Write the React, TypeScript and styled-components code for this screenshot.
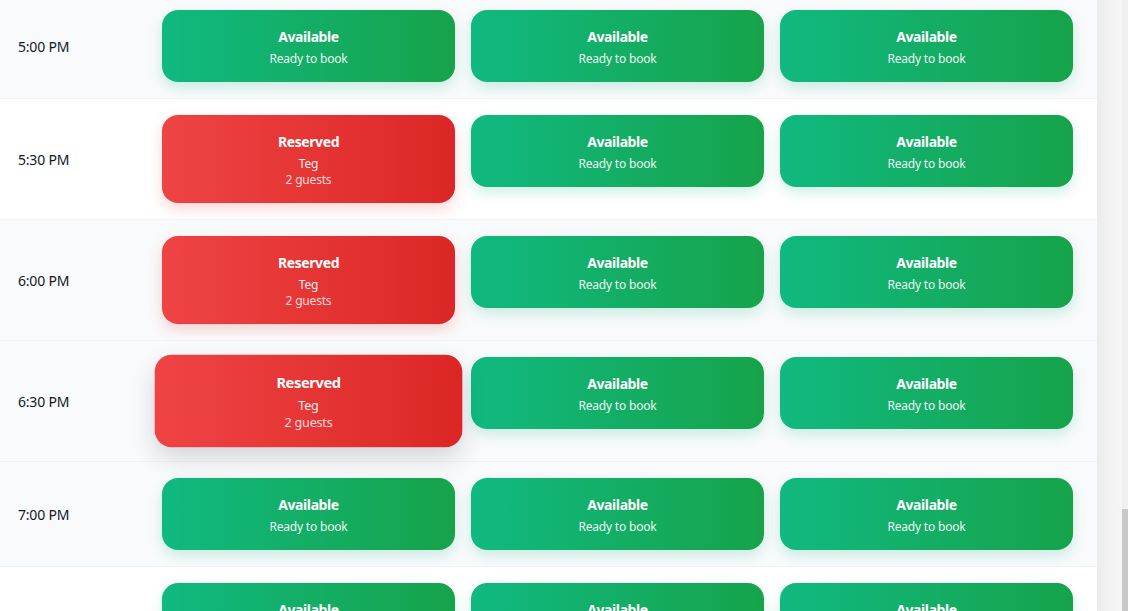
import React from "react";
import styled, { createGlobalStyle, css } from "styled-components";

const GlobalStyle = createGlobalStyle`
  html, body { margin: 0; padding: 0; height: 100%; overflow: hidden; background: #f3f4f6; }
  body { font-family: "Noto Sans", "Open Sans", sans-serif; }
  * { box-sizing: border-box; }
`;

const Page = styled.div`
  display: flex;
  width: 1128px;
  height: 611px;
  overflow: hidden;
`;

const Board = styled.div`
  width: 1097px;
  flex: none;
  background: #ffffff;
  margin-top: -6px;
  display: flex;
  flex-direction: column;
`;

const Gutter = styled.div`
  width: 25px;
  flex: none;
  background: linear-gradient(90deg, #ebebeb 0%, #f2f2f2 50%, #f6f6f6 100%);
`;

const ScrollTrack = styled.div`
  width: 6px;
  flex: none;
  background: #f0f0f0;
  display: flex;
  flex-direction: column;
  justify-content: flex-end;
`;

const ScrollThumb = styled.div`
  height: 102px;
  background: #c8c8c8;
`;

const Row = styled.div<{ $tone: "gray" | "white" | "hover" }>`
  display: grid;
  grid-template-columns: 128px repeat(3, 293px);
  column-gap: 16px;
  align-items: start;
  padding: 16px 24px 16px 18px;
  border-top: 1px solid #f1f2f4;
  background: ${(p) =>
    p.$tone === "gray" ? "#f9fafb" : p.$tone === "hover" ? "#f9fafc" : "#ffffff"};
  &:first-child { border-top: none; }
`;

const Time = styled.div`
  align-self: center;
  padding-top: 2px;
  font-size: 14px;
  line-height: 20px;
  letter-spacing: -0.2px;
  color: #111827;
`;

const Slot = styled.div<{ $reserved?: boolean; $hover?: boolean }>`
  border-radius: 16px;
  padding: 17px 16px 15px;
  text-align: center;
  color: #ffffff;
  ${(p) =>
    p.$reserved
      ? css`
          background: linear-gradient(90deg, #ef4444 0%, #dc2626 100%);
          box-shadow: 0 6px 14px rgba(239, 68, 68, 0.22);
        `
      : css`
          background: linear-gradient(90deg, #10b981 0%, #16a34a 100%);
          box-shadow: 0 6px 14px rgba(16, 185, 129, 0.2);
        `}
  ${(p) =>
    p.$hover &&
    css`
      transform: scale(1.05);
      box-shadow: 0 10px 22px rgba(15, 23, 42, 0.16);
    `}
`;

const Title = styled.div`
  font-size: 14px;
  line-height: 20px;
  font-weight: 700;
  letter-spacing: -0.4px;
  margin-bottom: 4px;
`;

const Sub = styled.div<{ $dim?: boolean }>`
  font-size: 12px;
  line-height: 16px;
  letter-spacing: -0.2px;
  opacity: ${(p) => (p.$dim ? 0.8 : 0.92)};
`;

type Cell = { reserved?: boolean; name?: string; guests?: number; hover?: boolean };

const rows: { time: string; tone: "gray" | "white" | "hover"; cells: Cell[] }[] = [
  { time: "5:00 PM", tone: "gray", cells: [{}, {}, {}] },
  { time: "5:30 PM", tone: "white", cells: [{ reserved: true, name: "Teg", guests: 2 }, {}, {}] },
  { time: "6:00 PM", tone: "gray", cells: [{ reserved: true, name: "Teg", guests: 2 }, {}, {}] },
  { time: "6:30 PM", tone: "hover", cells: [{ reserved: true, name: "Teg", guests: 2, hover: true }, {}, {}] },
  { time: "7:00 PM", tone: "gray", cells: [{}, {}, {}] },
  { time: "7:30 PM", tone: "white", cells: [{}, {}, {}] },
];

export default function App() {
  return (
    <>
      <GlobalStyle />
      <Page>
        <Board>
          {rows.map((r) => (
            <Row key={r.time} $tone={r.tone}>
              <Time>{r.time}</Time>
              {r.cells.map((c, i) =>
                c.reserved ? (
                  <Slot key={i} $reserved $hover={c.hover}>
                    <Title>Reserved</Title>
                    <Sub>{c.name}</Sub>
                    <Sub $dim>{c.guests} guests</Sub>
                  </Slot>
                ) : (
                  <Slot key={i}>
                    <Title>Available</Title>
                    <Sub>Ready to book</Sub>
                  </Slot>
                )
              )}
            </Row>
          ))}
        </Board>
        <Gutter />
        <ScrollTrack>
          <ScrollThumb />
        </ScrollTrack>
      </Page>
    </>
  );
}
